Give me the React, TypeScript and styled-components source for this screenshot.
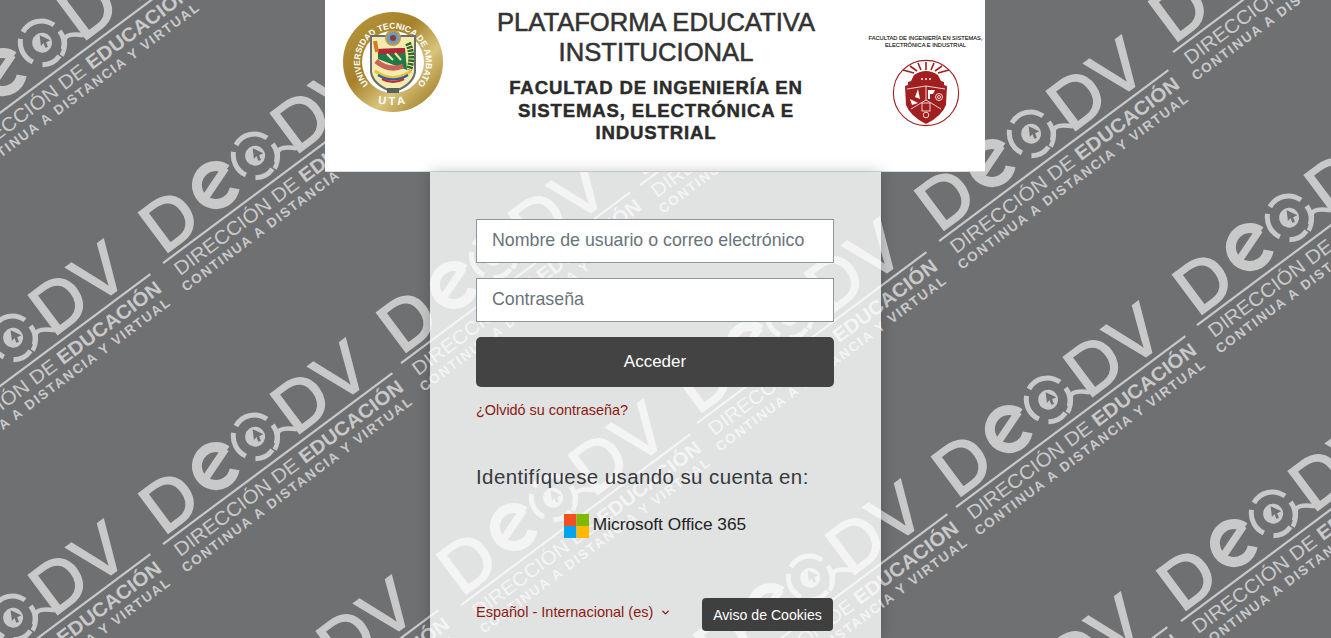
import { ChevronDown } from 'lucide-react';
import styled, { createGlobalStyle } from 'styled-components';

const GlobalStyle = createGlobalStyle`
  html, body {
    margin: 0;
    padding: 0;
    height: 100%;
    overflow: hidden;
    background: #6f7072;
    font-family: 'Liberation Sans', Arial, sans-serif;
  }
  * {
    box-sizing: border-box;
  }
`;

const Page = styled.div`
  position: relative;
  display: flex;
  flex-direction: column;
  align-items: center;
  height: 638px;
  padding-right: 21px;
  overflow: hidden;
`;

const Backdrop = styled.svg`
  position: absolute;
  top: 0;
  left: 0;
  width: 1331px;
  height: 638px;
`;

const Header = styled.header`
  position: relative;
  display: grid;
  grid-template-columns: 136px 1fr 136px;
  align-items: start;
  flex: none;
  width: 660px;
  height: 172px;
  background: #fff;
  border-bottom: 1px solid #dcdcdc;
`;

const SealCell = styled.div`
  display: flex;
  justify-content: center;
  padding-top: 12px;
`;

const FacultyCell = styled.div`
  display: flex;
  flex-direction: column;
  align-items: center;
  padding: 35px 0 0 17px;
`;

const FacultyCaption = styled.div`
  width: 119px;
  font-size: 5.7px;
  line-height: 6.5px;
  text-align: center;
  color: #111;
  -webkit-text-stroke: 0.12px #111;
  margin-bottom: 11px;
  white-space: nowrap;
`;

const Titles = styled.div`
  display: flex;
  flex-direction: column;
  align-items: center;
  padding: 7px 0 0 2px;
  text-align: center;
  color: #333;
`;

const MainTitle = styled.h1`
  margin: 0;
  font-size: 25.6px;
  line-height: 30px;
  font-weight: 400;
  white-space: nowrap;
  -webkit-text-stroke: 0.55px #333;
`;

const SubTitle = styled.h2`
  margin: 10px 0 0;
  width: 310px;
  font-size: 18.6px;
  line-height: 22.6px;
  font-weight: 700;
  letter-spacing: 0.85px;
  color: #2b2b2b;
  -webkit-text-stroke: 0.45px #2b2b2b;
`;

const Panel = styled.main`
  position: relative;
  display: flex;
  flex-direction: column;
  flex: 1;
  width: 451px;
  margin-left: 1px;
  padding: 47px 47px 0 46px;
  background: rgba(255, 255, 255, 0.795);
  box-shadow: 0 0 14px rgba(0, 0, 0, 0.22);
  color: #373a3c;
`;

const Field = styled.input`
  display: block;
  width: 358px;
  height: 44px;
  margin-bottom: 15px;
  padding: 0 15px 2px;
  background: #fff;
  border: 1px solid #8f959e;
  border-radius: 0;
  font-family: inherit;
  font-size: 17.8px;
  &::placeholder {
    color: #6a737b;
    opacity: 1;
  }
`;

const SubmitButton = styled.button`
  display: block;
  width: 358px;
  height: 50px;
  margin-bottom: 14px;
  background: #434343;
  border: 0;
  border-radius: 5px;
  color: #fff;
  font-family: inherit;
  font-size: 17px;
`;

const ForgotLink = styled.a`
  display: block;
  height: 18px;
  font-size: 14.4px;
  line-height: 18px;
  color: #8a1a12;
`;

const LoginTitle = styled.h2`
  margin: 46px 0 0;
  font-size: 20.5px;
  line-height: 24px;
  font-weight: 400;
  letter-spacing: 0.4px;
`;

const ProviderRow = styled.a`
  display: flex;
  align-items: center;
  justify-content: center;
  gap: 4px;
  margin-top: 23px;
  font-size: 17.3px;
  line-height: 24px;
  color: #222;
`;

const ProviderName = styled.span`
  margin-bottom: 3px;
`;

const FooterRow = styled.div`
  display: flex;
  align-items: center;
  justify-content: space-between;
  margin-top: 59px;
  width: 358px;
`;

const LanguageMenu = styled.a`
  display: flex;
  align-items: center;
  gap: 7px;
  margin-bottom: 5px;
  font-size: 14.5px;
  color: #8a1a12;
`;

const CookieButton = styled.button`
  width: 131px;
  height: 33px;
  margin-right: 1px;
  background: #3f3f3f;
  border: 0;
  border-radius: 4px;
  color: #fff;
  font-family: inherit;
  font-size: 14.1px;
`;

const INK = '#c9c9c9';
const BASE = '#6f7072';

// where each watermark starts (left end of its rule), they are not on a regular grid
const marks: [number, number][] = [
  [-50, 150],
  [163, 263],
  [403, 81],
  [-79, 445],
  [163, 544],
  [-79, 725],
  [401, 363],
  [640, 185],
  [209, 781],
  [461, 605],
  [697, 423],
  [718, 685],
  [939, 241],
  [1173, 52],
  [956, 507],
  [1197, 325],
  [1181, 621],
  [938, 798],
];

const Watermark = ({ x, y }: { x: number; y: number }) => (
  <g transform={`translate(${x} ${y}) rotate(-36.7)`} fill={INK}>
    <rect x={0} y={-1} width={286} height={2.2} />
    <text x={5} y={-6} fontFamily="Liberation Sans" fontSize={71} stroke={INK} strokeWidth={2}>
      D
    </text>
    <g fill="none" stroke={INK}>
      <path d="M107 -37 A19 19 0 1 0 102 -17" strokeWidth={10} />
      <path d="M70 -26 L107 -39" strokeWidth={7.5} />
      <path
        d="M119 -21 A22 22 0 0 1 123 -47 M129 -51 A21 21 0 0 1 158 -38 M159 -30 A21 21 0 0 1 151 -13 M144 -10 A21 21 0 0 1 125 -13"
        strokeWidth={5}
      />
      <path d="M146 -9 Q153 -12 158 -20 Q163 -25 176 -12" strokeWidth={4.5} />
    </g>
    <circle cx={138} cy={-31} r={10} />
    <path d="M140.5 -38.5 L146 -28 L141.5 -29 L140 -24 L137.5 -25 L139 -30 L135 -29 Z" fill={BASE} />
    <text x={170} y={-7} fontFamily="Liberation Sans" fontSize={71} stroke={INK} strokeWidth={1.6}>
      D
    </text>
    <text x={222} y={-7} fontFamily="Liberation Sans" fontSize={71} stroke={INK} strokeWidth={1.6}>
      V
    </text>
    <text x={6} y={21} fontFamily="Liberation Sans" fontSize={19.5} textLength={280} lengthAdjust="spacingAndGlyphs">
      DIRECCIÓN DE <tspan fontWeight={700}>EDUCACIÓN</tspan>
    </text>
    <text x={1} y={37} fontFamily="Liberation Sans" fontSize={13.5} fontWeight={700} textLength={283}>
      CONTINUA A DISTANCIA Y VIRTUAL
    </text>
  </g>
);

const UtaSeal = () => (
  <svg width="100" height="100" viewBox="0 0 100 100" aria-label="UTA">
    <defs>
      <linearGradient id="gold" x1="0" y1="0" x2="1" y2="1">
        <stop offset="0" stopColor="#b8993f" />
        <stop offset="0.4" stopColor="#a5812a" />
        <stop offset="0.65" stopColor="#d9c47c" />
        <stop offset="1" stopColor="#8f6a12" />
      </linearGradient>
      <path id="sealTop" d="M25.6 72 A33 33 0 1 1 74.4 72" />
      <path id="sealBottom" d="M30 90 Q50 96 70 90" />
    </defs>
    <circle cx="50" cy="50" r="50" fill="url(#gold)" />
    <circle cx="50" cy="50" r="31" fill="#fff" />
    <text fontFamily="Liberation Sans" fontSize="8.6" fontWeight="700" fill="#fff">
      <textPath href="#sealTop" textLength="152">
        UNIVERSIDAD TECNICA DE AMBATO
      </textPath>
    </text>
    <text fontFamily="Liberation Sans" fontSize="11" fontWeight="700" fill="#fff" letterSpacing="3" textAnchor="middle">
      <textPath href="#sealBottom" startOffset="50%">
        UTA
      </textPath>
    </text>
    <path d="M28 24 H72 L72 32 V60 Q70 73 50 80 Q30 73 28 60 V32 Z" fill="#f4ecae" stroke="#6b6f70" strokeWidth="2" />
    <circle cx="50" cy="26" r="7" fill="#6a9bc4" stroke="#b99a4e" strokeWidth="2" />
    <circle cx="50" cy="26" r="3" fill="#8d3b2e" />
    <path d="M35 37 L62 36 L64 58 L35 47 Z" fill="#1f7a48" />
    <path d="M35 37 L62 36 L62 41 L35 42 Z" fill="#bb2438" />
    <path d="M44 42 L50 48 M52 41 L58 48" stroke="#f2e6a0" strokeWidth="2" />
    <path d="M65 31 Q71 44 66 58" stroke="#2e6a2a" strokeWidth="6" fill="none" strokeDasharray="2.4 1" />
    <path d="M32 29 L34 40" stroke="#d8792a" strokeWidth="4" />
    <path d="M33 49 Q46 60 60 54" stroke="#c9635a" strokeWidth="5" fill="none" />
    <path d="M32 59 Q50 72 68 59" stroke="#e8c43a" strokeWidth="3" fill="none" />
    <path d="M35 63 Q50 72 65 63" stroke="#2f5ea8" strokeWidth="2.4" fill="none" />
    <path d="M39 67 Q50 73 61 67" stroke="#c22d2d" strokeWidth="2.2" fill="none" />
    <path d="M44 76 H56 V81 H44 Z" fill="#55625c" />
  </svg>
);

const FacultySeal = () => (
  <svg width="68" height="68" viewBox="0 0 68 68" aria-label="Facultad">
    <circle cx="34" cy="34" r="32.6" fill="#fff" stroke="#a11f1f" strokeWidth="1.1" />
    <g stroke="#a11f1f" strokeWidth="1.6">
      <path d="M34 3 V11 M26 4 L29 11 M42 4 L39 11 M18 7 L25 12 M50 7 L43 12 M11 11 L22 14 M57 11 L46 14" />
    </g>
    <path d="M22 16 Q34 8 46 16 L49 22 L52 23 V26 L55 27 L54 46 Q50 57 34 65 Q18 57 14 46 L13 27 L16 26 V23 L19 22 Z" fill="#a11f1f" />
    <g stroke="#fff" strokeWidth="0.8" fill="none">
      <path d="M15 30 L34 27 L53 30 M34 27 V41 M34 41 L19 50 M34 41 L49 50" />
      <rect x="30" y="44" width="8" height="8" />
      <circle cx="34" cy="56" r="2.8" />
      <circle cx="47" cy="38" r="3.5" />
      <circle cx="47" cy="38" r="1.5" />
    </g>
    <path d="M26 30 L28 40 L23 38 Z M36 31 H43 L41 35 H38 V40 H36 Z M18 40 L26 44 L20 46 Z" fill="#fff" />
    <circle cx="30" cy="20" r="0.9" fill="#fff" />
    <circle cx="34" cy="20" r="0.9" fill="#fff" />
    <circle cx="38" cy="20" r="0.9" fill="#fff" />
  </svg>
);

const MicrosoftLogo = () => (
  <svg width="25" height="24" viewBox="0 0 24 24" preserveAspectRatio="none" aria-hidden="true">
    <rect width="12" height="12" fill="#f25022" />
    <rect x="12" width="12" height="12" fill="#7fba00" />
    <rect y="12" width="12" height="12" fill="#00a4ef" />
    <rect x="12" y="12" width="12" height="12" fill="#ffb900" />
  </svg>
);

const App = () => {
  return (
    <Page>
      <GlobalStyle />
      <Backdrop viewBox="0 0 1331 638" aria-hidden="true">
        {marks.map(([x, y]) => (
          <Watermark key={`${x}-${y}`} x={x} y={y} />
        ))}
      </Backdrop>
      <Header>
        <SealCell>
          <UtaSeal />
        </SealCell>
        <Titles>
          <MainTitle>
            PLATAFORMA EDUCATIVA
            <br />
            INSTITUCIONAL
          </MainTitle>
          <SubTitle>FACULTAD DE INGENIERÍA EN SISTEMAS, ELECTRÓNICA E INDUSTRIAL</SubTitle>
        </Titles>
        <FacultyCell>
          <FacultyCaption>
            FACULTAD DE INGENIERÍA EN SISTEMAS,
            <br />
            ELECTRÓNICA E INDUSTRIAL
          </FacultyCaption>
          <FacultySeal />
        </FacultyCell>
      </Header>
      <Panel>
        <Field placeholder="Nombre de usuario o correo electrónico" />
        <Field type="password" placeholder="Contraseña" />
        <SubmitButton>Acceder</SubmitButton>
        <ForgotLink>¿Olvidó su contraseña?</ForgotLink>
        <LoginTitle>Identifíquese usando su cuenta en:</LoginTitle>
        <ProviderRow>
          <MicrosoftLogo />
          <ProviderName>Microsoft Office 365</ProviderName>
        </ProviderRow>
        <FooterRow>
          <LanguageMenu>
            Español - Internacional (es)
            <ChevronDown size={11} strokeWidth={3} />
          </LanguageMenu>
          <CookieButton>Aviso de Cookies</CookieButton>
        </FooterRow>
      </Panel>
    </Page>
  );
};

export default App;
